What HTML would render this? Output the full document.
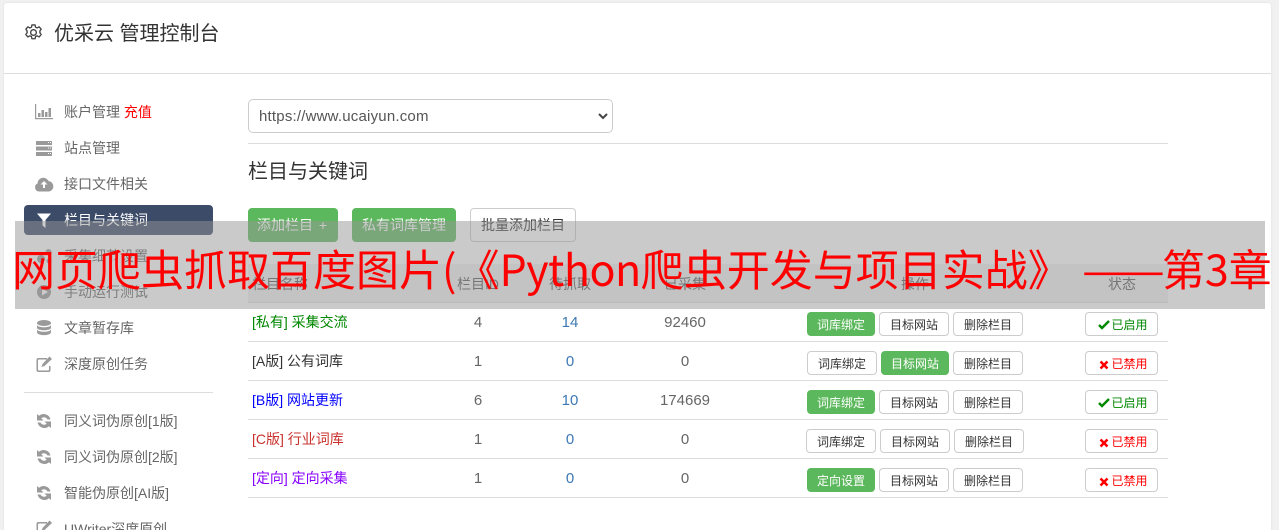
<!DOCTYPE html>
<html lang="zh"><head><meta charset="utf-8">
<style>
html,body{margin:0;padding:0;width:1279px;height:530px;overflow:hidden}
body{background:#f1f1f1;position:relative;font-family:"Liberation Sans","Noto Sans CJK SC",sans-serif;color:#333;font-size:13px}
.a{position:absolute;white-space:nowrap}
#card{left:4px;top:3px;width:1267px;height:527px;background:#fff;border-radius:3px 3px 0 0;box-shadow:0 0 2px #ddd}
.nav{left:64px;color:#666;font-size:14px;line-height:20px;height:20px}
.ic{position:absolute;left:34px;width:20px;height:20px;fill:#9a9a9a}
.hr{background:#ddd;height:1px}
.btn{position:absolute;box-sizing:border-box;border:1px solid #ccc;border-radius:4px;background:#fff;color:#333;text-align:center;font-size:12px;line-height:24px;height:24px;white-space:nowrap}
.g{background:#5cb85c;border-color:#5cb85c;color:#fff}
.big{height:34px;line-height:33px;font-size:14px}
.n{position:absolute;text-align:center;font-size:15px;line-height:21px;color:#666}
.th{position:absolute;text-align:center;font-size:14px;line-height:20px;color:#555}
.nm{left:252px;font-size:14px;line-height:20px}
.b{color:#3d78b4}
</style></head><body>
<div class="a" id="card"></div>
<svg class="a" style="left:24px;top:23px" width="19" height="19" viewBox="0 0 24 24" fill="none" stroke="#444" stroke-width="1.7" stroke-linejoin="round"><circle cx="12" cy="12" r="3.6"/><path d="M10 2.500h4l.6 2.800 2 .9 2.500-1.400 2.600 3-1.700 2.300.3 2-.3.2 1.700 2.300-2.600 3-2.500-1.400-2 .9-.6 2.800h-4l-.6-2.800-2-.9-2.500 1.400-2.600-3 1.700-2.300-.3-2 .3-.2-1.700-2.300 2.600-3 2.500 1.400 2-.9z"/></svg>
<div class="a" style="left:54px;top:21px;font-size:20px;line-height:26px;color:#333">优采云 管理控制台</div>
<div class="a hr" style="left:4px;top:73px;width:1267px"></div>

<svg class="ic" style="top:102px" viewBox="0 0 20 20"><path d="M1 2h1.200v14H19v1.200H1z"/><path d="M4 11h2.500v4H4zM7.500 8h2.500v7H7.500zM11 10h2.500v5H11zM14.500 6H17v9h-2.500z"/></svg>
<div class="a nav" style="top:102px">账户管理 <span style="color:#f00">充值</span></div>
<svg class="ic" style="top:138px" viewBox="0 0 20 20"><path d="M2 3h16v4H2zM2 8.500h16v4H2zM2 14h16v4H2z"/><path fill="#fff" d="M14 4h1v1h-1zM16 4h1v1h-1zM14 9.500h1v1h-1zM16 9.500h1v1h-1zM14 15h1v1h-1zM16 15h1v1h-1z"/></svg>
<div class="a nav" style="top:138px">站点管理</div>
<svg class="ic" style="top:174px" viewBox="0 0 20 20"><path d="M5 17.500a4.200 4.200 0 0 1-1.500-8A5.800 5.800 0 0 1 14.500 7 5.300 5.300 0 0 1 15 17.500z"/><path fill="#fff" d="M10 7l3.500 3.500H11V14H9v-3.500H6.500z"/></svg>
<div class="a nav" style="top:174px">接口文件相关</div>
<div class="a" style="left:24px;top:205px;width:189px;height:30px;background:#3b4b68;border-radius:4px"></div>
<svg class="ic" style="top:210px;fill:#fff" viewBox="0 0 20 20"><path d="M3 3.500h14l-5.500 6.500V18l-3-2.500V10z"/></svg>
<div class="a nav" style="top:210px;color:#fff">栏目与关键词</div>
<svg class="ic" style="top:246px" viewBox="0 0 20 20"><circle cx="7" cy="13" r="4"/><circle cx="14.500" cy="6" r="3"/><circle cx="15" cy="15" r="2.500"/></svg>
<div class="a nav" style="top:246px">采集细节设置</div>
<svg class="ic" style="top:282px" viewBox="0 0 20 20"><path fill-rule="evenodd" d="M10 3a7 7 0 1 0 0 14 7 7 0 0 0 0-14zM8 6.500l6 3.500-6 3.500z"/></svg>
<div class="a nav" style="top:282px">手动运行测试</div>
<svg class="ic" style="top:318px" viewBox="0 0 20 20"><ellipse cx="10" cy="5" rx="7" ry="3"/><path d="M3 7c1 3 13 3 14 0v3c-1 3-13 3-14 0zM3 11.500c1 3 13 3 14 0v3C16 18 4 18 3 14.500z"/></svg>
<div class="a nav" style="top:318px">文章暂存库</div>
<svg class="ic" style="top:354px" viewBox="0 0 20 20"><path d="M5 4h8v1.500H5A1 1 0 0 0 4 6.500v9a1 1 0 0 0 1 1h9a1 1 0 0 0 1-1V12h1.500v4a2 2 0 0 1-2 2H4.500a2 2 0 0 1-2-2V6a2 2 0 0 1 2-2z"/><path d="M8.500 10l7-7.500 2.500 2.500-7.500 7-3 1z"/></svg>
<div class="a nav" style="top:354px">深度原创任务</div>
<div class="a hr" style="left:24px;top:392px;width:189px"></div>
<svg class="ic" style="top:411px" viewBox="0 0 20 20"><path d="M16.500 8.500A7 7 0 0 0 5 4.800L3 3v6.500h6.500L7.300 7.300A4 4 0 0 1 13.500 8.500zM3.500 11.500A7 7 0 0 0 15 15.200l2 1.800v-6.500h-6.500l2.200 2.200A4 4 0 0 1 6.500 11.500z"/></svg>
<div class="a nav" style="top:411px">同义词伪原创[1版]</div>
<svg class="ic" style="top:447px" viewBox="0 0 20 20"><path d="M16.500 8.500A7 7 0 0 0 5 4.800L3 3v6.500h6.500L7.300 7.300A4 4 0 0 1 13.500 8.500zM3.500 11.500A7 7 0 0 0 15 15.200l2 1.800v-6.500h-6.500l2.200 2.200A4 4 0 0 1 6.500 11.500z"/></svg>
<div class="a nav" style="top:447px">同义词伪原创[2版]</div>
<svg class="ic" style="top:483px" viewBox="0 0 20 20"><path d="M16.500 8.500A7 7 0 0 0 5 4.800L3 3v6.500h6.500L7.300 7.300A4 4 0 0 1 13.500 8.500zM3.500 11.500A7 7 0 0 0 15 15.200l2 1.800v-6.500h-6.500l2.200 2.200A4 4 0 0 1 6.500 11.500z"/></svg>
<div class="a nav" style="top:483px">智能伪原创[AI版]</div>
<svg class="ic" style="top:518px" viewBox="0 0 20 20"><path d="M5 4h8v1.500H5A1 1 0 0 0 4 6.500v9a1 1 0 0 0 1 1h9a1 1 0 0 0 1-1V12h1.500v4a2 2 0 0 1-2 2H4.500a2 2 0 0 1-2-2V6a2 2 0 0 1 2-2z"/><path d="M8.500 10l7-7.500 2.500 2.500-7.500 7-3 1z"/></svg>
<div class="a nav" style="top:519px">UWriter深度原创</div>

<div class="a" style="left:248px;top:99px;width:365px;height:34px;box-sizing:border-box;border:1px solid #ccc;border-radius:5px;background:#fff"></div>
<div class="a" style="left:259px;top:107px;font-size:15px;letter-spacing:.2px;line-height:20px;color:#555">https://www.ucaiyun.com</div>
<svg class="a" style="left:597px;top:112px" width="12" height="9" viewBox="0 0 12 9" fill="none" stroke="#444" stroke-width="2"><path d="M2 2l4 4 4-4"/></svg>
<div class="a hr" style="left:248px;top:143px;width:920px"></div>
<div class="a" style="left:248px;top:158px;font-size:20px;line-height:28px;color:#333">栏目与关键词</div>

<div class="btn big g" style="left:248px;top:208px;width:90px;word-spacing:2px;padding-right:2px">添加栏目 +</div>
<div class="btn big g" style="left:352px;top:208px;width:104px">私有词库管理</div>
<div class="btn big" style="left:470px;top:208px;width:106px">批量添加栏目</div>

<div class="a" style="left:248px;top:264px;width:920px;height:38px;background:#f1f1f1;border-bottom:1px solid #ddd"></div>
<div class="th" style="left:252px;top:274px">栏目名称</div>
<div class="th" style="left:438px;width:80px;top:274px">栏目ID</div>
<div class="th" style="left:530px;width:80px;top:274px">待抓取</div>
<div class="th" style="left:645px;width:80px;top:274px">已采集</div>
<div class="th" style="left:875px;width:80px;top:274px">操作</div>
<div class="th" style="left:1082px;width:80px;top:274px">状态</div>

<div class="a nm" style="top:312px;color:#080">[私有] 采集交流</div>
<div class="n" style="left:438px;width:80px;top:312px">4</div><div class="n b" style="left:530px;width:80px;top:312px">14</div><div class="n" style="left:645px;width:80px;top:312px">92460</div>
<div class="a hr" style="left:248px;top:341px;width:920px"></div>
<div class="a nm" style="top:351px;color:#333">[A版] 公有词库</div>
<div class="n" style="left:438px;width:80px;top:351px">1</div><div class="n b" style="left:530px;width:80px;top:351px">0</div><div class="n" style="left:645px;width:80px;top:351px">0</div>
<div class="a hr" style="left:248px;top:380px;width:920px"></div>
<div class="a nm" style="top:390px;color:#00f">[B版] 网站更新</div>
<div class="n" style="left:438px;width:80px;top:390px">6</div><div class="n b" style="left:530px;width:80px;top:390px">10</div><div class="n" style="left:645px;width:80px;top:390px">174669</div>
<div class="a hr" style="left:248px;top:419px;width:920px"></div>
<div class="a nm" style="top:429px;color:#c9302c">[C版] 行业词库</div>
<div class="n" style="left:438px;width:80px;top:429px">1</div><div class="n b" style="left:530px;width:80px;top:429px">0</div><div class="n" style="left:645px;width:80px;top:429px">0</div>
<div class="a hr" style="left:248px;top:458px;width:920px"></div>
<div class="a nm" style="top:468px;color:#80f">[定向] 定向采集</div>
<div class="n" style="left:438px;width:80px;top:468px">1</div><div class="n b" style="left:530px;width:80px;top:468px">0</div><div class="n" style="left:645px;width:80px;top:468px">0</div>
<div class="a hr" style="left:248px;top:497px;width:920px"></div>

<div class="btn g" style="left:807px;top:312px;width:68px">词库绑定</div><div class="btn" style="left:879px;top:312px;width:70px">目标网站</div><div class="btn" style="left:953px;top:312px;width:70px">删除栏目</div>
<div class="btn" style="left:807px;top:351px;width:70px">词库绑定</div><div class="btn g" style="left:881px;top:351px;width:68px">目标网站</div><div class="btn" style="left:953px;top:351px;width:70px">删除栏目</div>
<div class="btn g" style="left:807px;top:390px;width:68px">词库绑定</div><div class="btn" style="left:879px;top:390px;width:70px">目标网站</div><div class="btn" style="left:953px;top:390px;width:70px">删除栏目</div>
<div class="btn" style="left:806px;top:429px;width:70px">词库绑定</div><div class="btn" style="left:880px;top:429px;width:70px">目标网站</div><div class="btn" style="left:954px;top:429px;width:70px">删除栏目</div>
<div class="btn g" style="left:807px;top:468px;width:68px">定向设置</div><div class="btn" style="left:879px;top:468px;width:70px">目标网站</div><div class="btn" style="left:953px;top:468px;width:70px">删除栏目</div>

<div class="btn" style="left:1085px;top:312px;width:73px;color:#080;padding-left:16px">已启用</div>
<div class="btn" style="left:1085px;top:351px;width:73px;color:#f00;padding-left:16px">已禁用</div>
<div class="btn" style="left:1085px;top:390px;width:73px;color:#080;padding-left:16px">已启用</div>
<div class="btn" style="left:1085px;top:429px;width:73px;color:#f00;padding-left:16px">已禁用</div>
<div class="btn" style="left:1085px;top:468px;width:73px;color:#f00;padding-left:16px">已禁用</div>
<svg class="a" style="left:1098px;top:320px" width="12" height="10" viewBox="0 0 12 10" fill="none" stroke="#080" stroke-width="2.400"><path d="M1 5l3 3 7-7"/></svg>
<svg class="a" style="left:1098px;top:398px" width="12" height="10" viewBox="0 0 12 10" fill="none" stroke="#080" stroke-width="2.400"><path d="M1 5l3 3 7-7"/></svg>
<svg class="a" style="left:1099px;top:360px" width="10" height="10" viewBox="0 0 10 10" fill="none" stroke="#f00" stroke-width="2.600"><path d="M1.500 1.500l7 7M8.500 1.500l-7 7"/></svg>
<svg class="a" style="left:1099px;top:438px" width="10" height="10" viewBox="0 0 10 10" fill="none" stroke="#f00" stroke-width="2.600"><path d="M1.500 1.500l7 7M8.500 1.500l-7 7"/></svg>
<svg class="a" style="left:1099px;top:477px" width="10" height="10" viewBox="0 0 10 10" fill="none" stroke="#f00" stroke-width="2.600"><path d="M1.500 1.500l7 7M8.500 1.500l-7 7"/></svg>

<div class="a" style="left:15px;top:221px;width:1250px;height:88px;background:rgba(150,150,150,.5)"></div>
<div class="a" style="left:12px;top:238px;font-size:43px;line-height:60px;color:#f00;text-spacing-trim:space-all;font-family:'Noto Sans CJK SC','Liberation Sans',sans-serif">网页爬虫抓取百度图片(《<span style="letter-spacing:-.5px">Python</span>爬虫开发与项目实战》<span style="display:inline-block;margin-left:11px;transform:scaleX(1.15);transform-origin:0 50%">——</span><span style="margin-left:8px">第3章</span></div>
</body></html>
